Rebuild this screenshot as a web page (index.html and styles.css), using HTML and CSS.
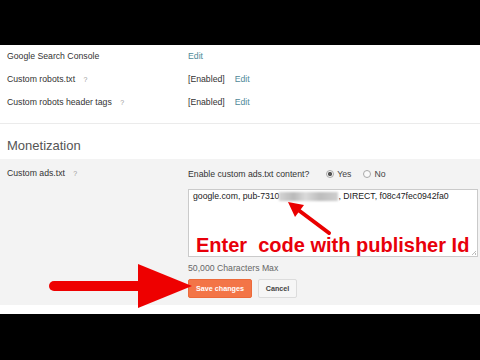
FILE: index.html
```html
<!DOCTYPE html>
<html lang="en">
<head>
    <meta charset="UTF-8">
    <title>Monetization settings</title>
    <link rel="stylesheet" href="styles.css">
</head>
<body>
<div class="frame">
    <div class="settings">
        <div class="row">
            <div class="label">Google Search Console</div>
            <a class="link">Edit</a>
        </div>
        <div class="row">
            <div class="label">Custom robots.txt <span class="help">?</span></div>
            <span class="state">[Enabled]</span><a class="link">Edit</a>
        </div>
        <div class="row">
            <div class="label">Custom robots header tags <span class="help">?</span></div>
            <span class="state">[Enabled]</span><a class="link">Edit</a>
        </div>
    </div>

    <h2 class="section-title">Monetization</h2>

    <div class="band">
        <div class="label">Custom ads.txt <span class="help">?</span></div>
        <div class="field">
            <div class="enable">
                <span>Enable custom ads.txt content?</span>
                <span class="radio checked"></span><span class="opt">Yes</span>
                <span class="radio"></span><span class="opt">No</span>
            </div>
            <div class="textbox">
                <div class="code">google.com, pub-7310<span class="blurred"></span>, DIRECT, f08c47fec0942fa0</div>
                <div class="note">Enter&nbsp; code with publisher Id</div>
                <span class="grip"></span>
            </div>
            <div class="hint">50,000 Characters Max</div>
            <div class="actions">
                <button class="btn save">Save changes</button>
                <button class="btn cancel">Cancel</button>
            </div>
        </div>
    </div>
</div>

<svg class="arrows" width="480" height="360" viewBox="0 0 480 360">
    <line x1="329" y1="233" x2="297" y2="209" stroke="#ea0000" stroke-width="4" stroke-linecap="round"/>
    <polygon points="288,202 304,205 295,217" fill="#ea0000"/>
    <line x1="54" y1="286" x2="142" y2="286" stroke="#ee0000" stroke-width="10" stroke-linecap="round"/>
    <polygon points="138,264 138,308 192,286" fill="#ee0000"/>
</svg>
</body>
</html>
```

FILE: styles.css
```css
* {
    margin: 0;
    padding: 0;
    box-sizing: border-box;
}

body {
    width: 480px;
    height: 360px;
    overflow: hidden;
    position: relative;
    background: #000;
    font-family: "Liberation Sans", Arial, sans-serif;
    color: #333;
}

.frame {
    margin-top: 45px;
    height: 269px;
    background: #fff;
}

.settings {
    padding: 0 0 9px 7px;
    border-bottom: 1px solid #ebebeb;
}
.row {
    display: flex;
    height: 23px;
    line-height: 23px;
    font-size: 8.7px;
}
.label {
    width: 181px;
    font-size: 8.7px;
}
.help {
    margin-left: 6px;
    font-size: 7px;
    color: #9a9a9a;
}
.link {
    color: #4f8a99;
}
.state {
    margin-right: 10px;
}

.section-title {
    padding: 14px 0 6px 7px;
    font-size: 13px;
    line-height: 15px;
    font-weight: normal;
    color: #555;
}

.band {
    display: flex;
    padding: 8px 2px 7px 7px;
    background: #f3f3f3;
}
.band .label {
    line-height: 12px;
}
.field {
    flex: 1;
    font-size: 8.7px;
}
.enable {
    display: flex;
    align-items: center;
    height: 12px;
    margin-top: 1px;
}
.radio {
    width: 8px;
    height: 8px;
    margin: 0 3px 0 17px;
    border: 1px solid #a9a9a9;
    border-radius: 50%;
    background: #fafafa;
}
.radio + .opt + .radio {
    margin-left: 12px;
}
.radio.checked {
    background: radial-gradient(circle, #555 0 1.8px, #f4f4f4 2.4px);
}
.opt {
    color: #444;
}

.textbox {
    position: relative;
    height: 68px;
    margin-top: 9px;
    border: 1px solid #cacaca;
    background: #fff;
}
.code {
    padding: 1px 0 0 4px;
    line-height: 10px;
    color: #222;
    white-space: nowrap;
}
.blurred {
    display: inline-block;
    width: 59px;
    height: 9px;
    vertical-align: -2px;
    background: linear-gradient(90deg, #d4d4d4, #b9b9b9 25%, #dadada 45%, #bdbdbd 70%, #cfcfcf);
    filter: blur(1.2px);
}
.note {
    position: absolute;
    left: 7px;
    top: 45px;
    font-size: 20px;
    line-height: 20px;
    font-weight: bold;
    color: #e8000a;
    white-space: nowrap;
}
.grip {
    position: absolute;
    right: 1px;
    bottom: 1px;
    width: 5px;
    height: 5px;
    background: linear-gradient(135deg, transparent 55%, #bbb 55%, #bbb 65%, transparent 65%, transparent 80%, #bbb 80%);
}

.hint {
    margin-top: 5px;
    line-height: 12px;
    color: #666;
}

.actions {
    display: flex;
    gap: 6px;
    margin-top: 5px;
}
.btn {
    height: 19px;
    border-radius: 2px;
    font-family: "Liberation Sans", Arial, sans-serif;
    font-size: 7.2px;
    font-weight: bold;
}
.save {
    width: 64px;
    border: 1px solid #ec6a3a;
    background: #f37547;
    color: #fff;
}
.cancel {
    width: 39px;
    border: 1px solid #dcdcdc;
    background: #f6f6f6;
    color: #444;
}

.arrows {
    position: absolute;
    left: 0;
    top: 0;
}
```
